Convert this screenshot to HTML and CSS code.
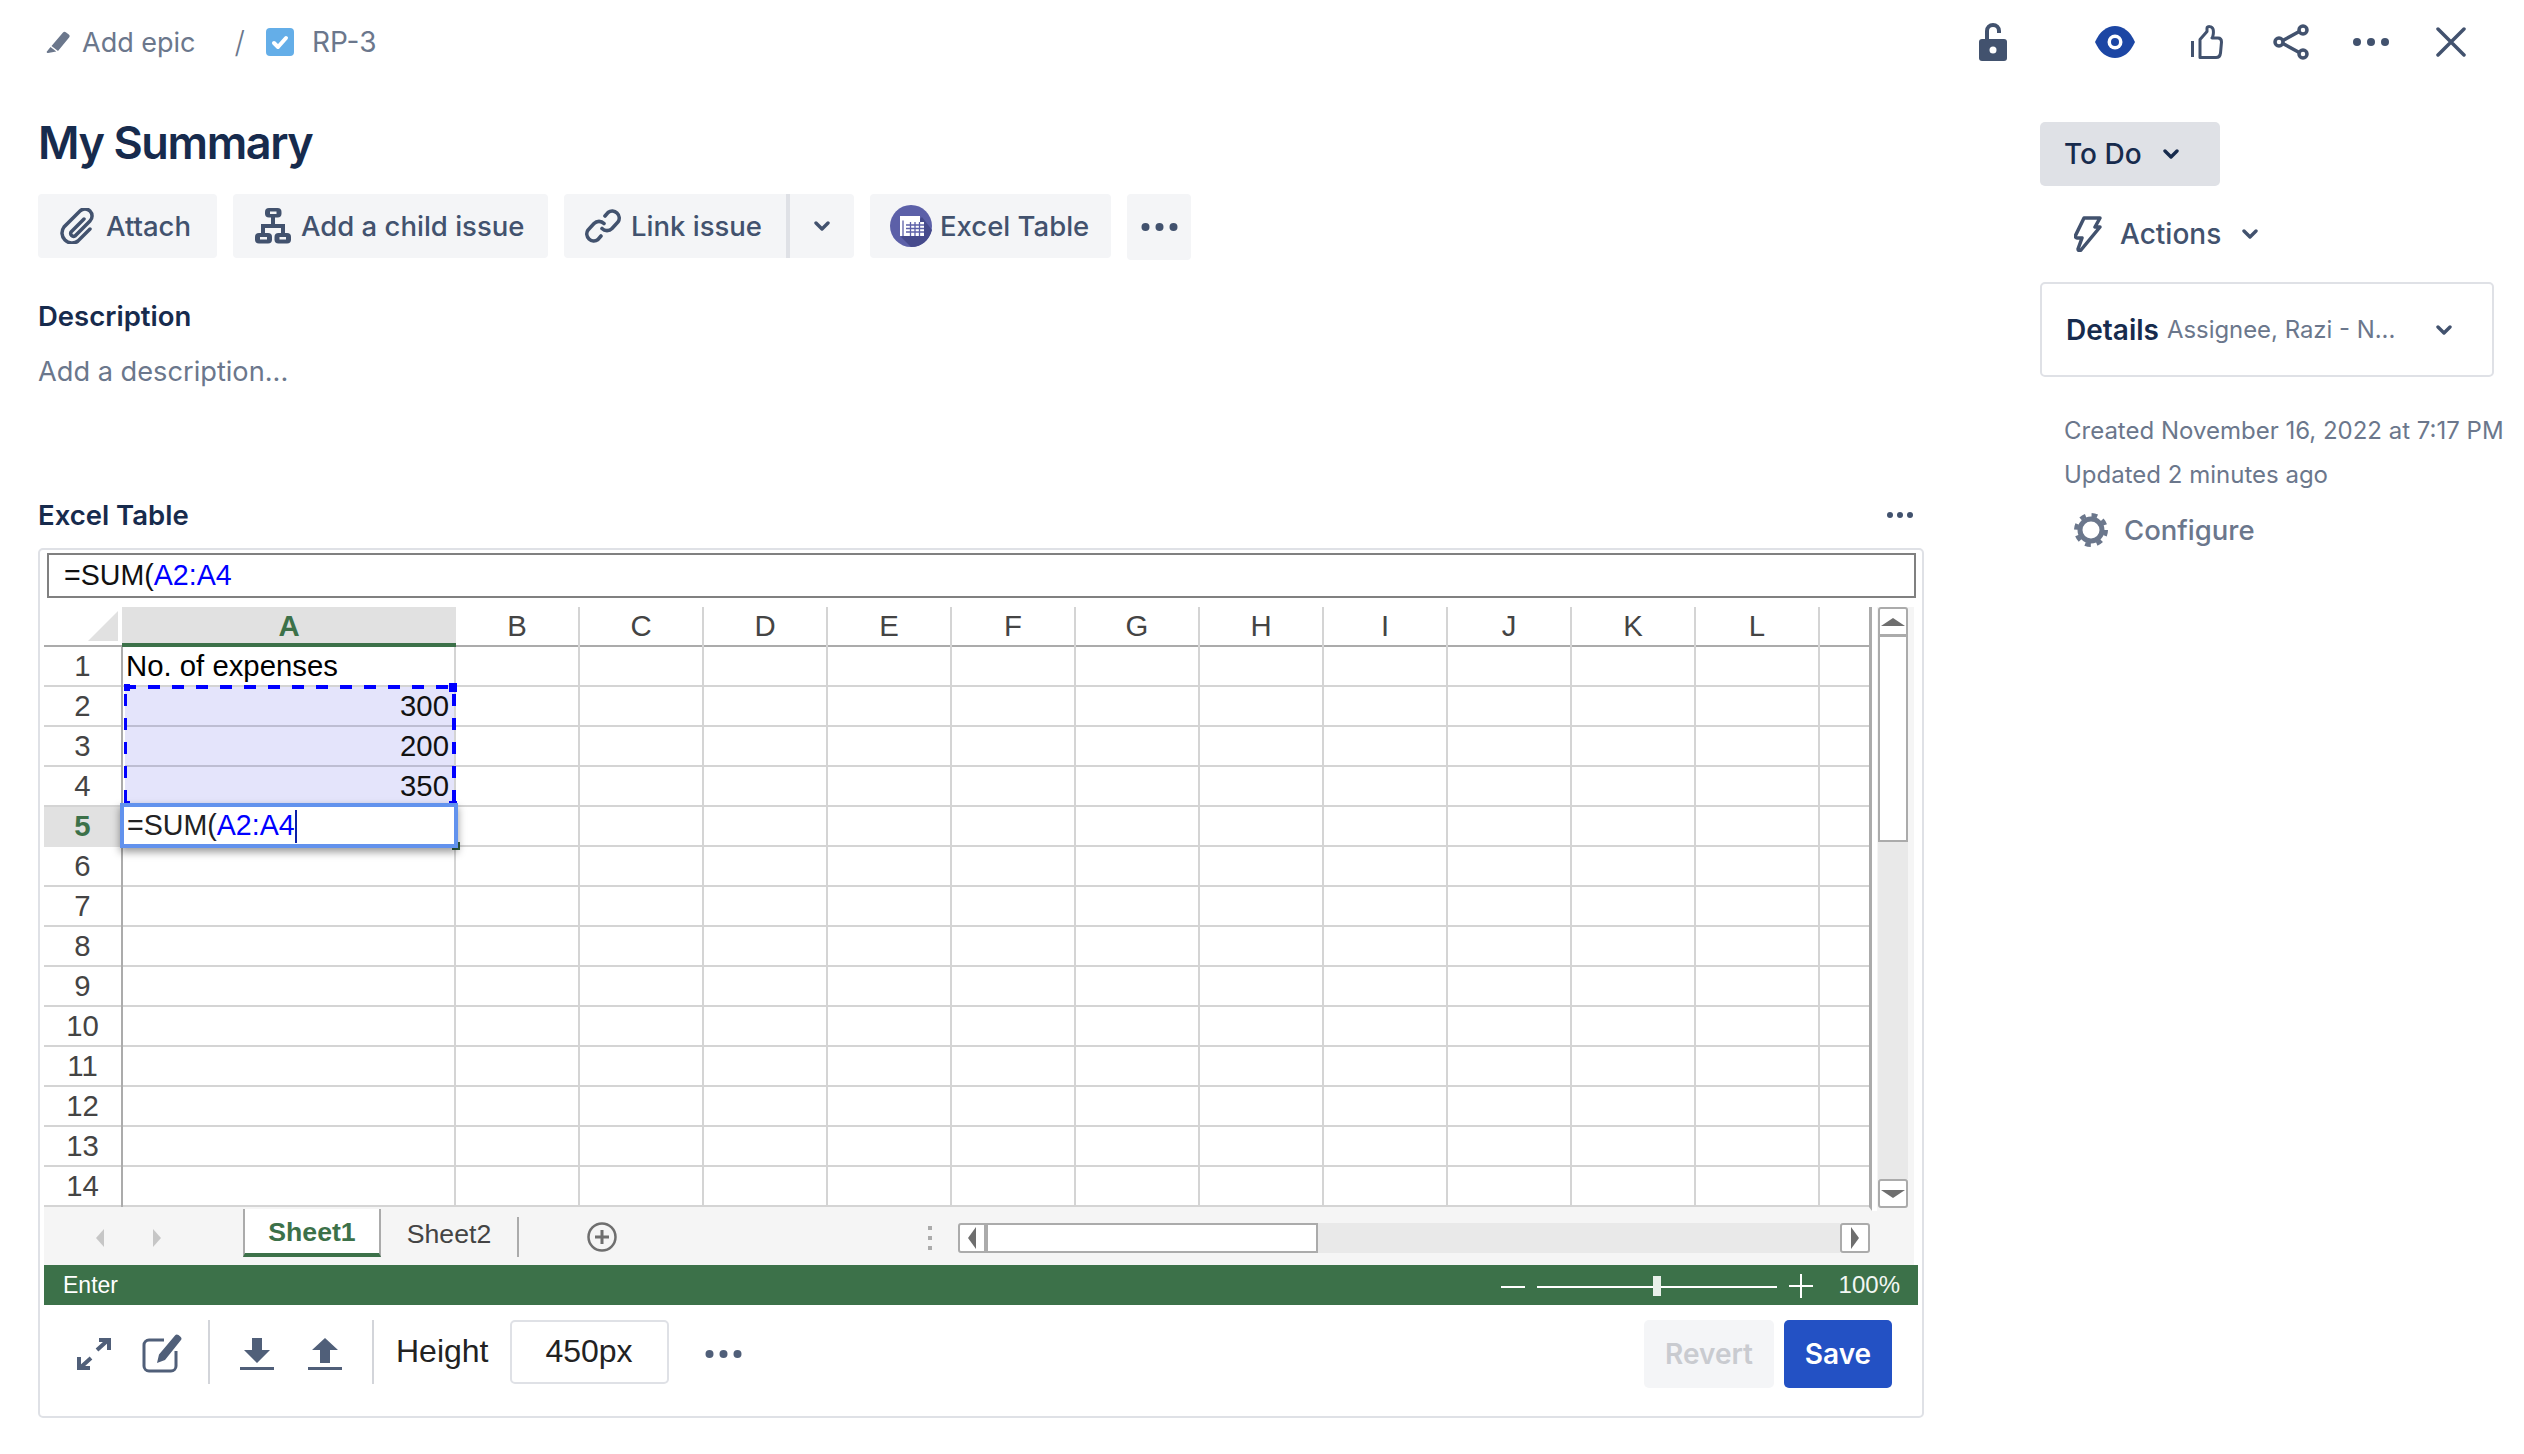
FILE: index.html
```html
<!DOCTYPE html>
<html lang="en">
<head>
<meta charset="utf-8">
<title>RP-3</title>
<link rel="stylesheet" href="styles.css">
</head>
<body>
<header class="topbar">
  <svg class="ic-pencil" viewBox="0 0 24 22"><path d="M17 1.500a2 2 0 0 1 2.800-.3l3 2.400a2 2 0 0 1 .3 2.800L12 20l-6.500-5z" fill="#6b778c"/><path d="M4.500 16l5.800 4.600L2 22c-1 .2-1.500-.5-1.300-1.300z" fill="#6b778c"/></svg>
  <span class="crumb">Add epic</span>
  <span class="crumb-sep">/</span>
  <svg class="ic-check" viewBox="0 0 28 28"><rect width="28" height="28" rx="4" fill="#64aee8"/><path d="M8 15l4 4 8-9" fill="none" stroke="#fff" stroke-width="4" stroke-linecap="round" stroke-linejoin="round"/></svg>
  <span class="crumb crumb-key">RP-3</span>
  <div class="top-actions">
    <svg class="ic-lock" viewBox="0 0 28 38"><path d="M8 18V8a6 6 0 0 1 12 0v2" fill="none" stroke="#42526e" stroke-width="4"/><rect y="16" width="28" height="22" rx="3" fill="#42526e"/><circle cx="14" cy="27" r="3.500" fill="#fff"/></svg>
    <svg class="ic-eye" viewBox="0 0 40 32"><path d="M0 16C5 5 12 0 20 0s15 5 20 16c-5 11-12 16-20 16S5 27 0 16z" fill="#1c46a4"/><circle cx="20" cy="16" r="7.500" fill="#fff"/><circle cx="20" cy="16" r="4" fill="#1c46a4"/></svg>
    <svg class="ic-thumb" viewBox="0 0 32 34"><path d="M1.500 16v16M9 14.500l7-8V3c0-2 5-2 6 1 1 3 0 8-1 9h6c3 0 3.500 2 3.500 4l-1 11c-.3 3-2 4.500-4.500 4.500H9z" fill="none" stroke="#42526e" stroke-width="3" stroke-linejoin="round"/></svg>
    <svg class="ic-share" viewBox="0 0 36 36"><path d="M7 18L29 6M7 18l22 12" stroke="#42526e" stroke-width="3.500"/><circle cx="6" cy="18" r="4" fill="#fff" stroke="#42526e" stroke-width="3.500"/><circle cx="30" cy="6" r="4" fill="#fff" stroke="#42526e" stroke-width="3.500"/><circle cx="30" cy="30" r="4" fill="#fff" stroke="#42526e" stroke-width="3.500"/></svg>
    <svg class="ic-dots" viewBox="0 0 36 8"><circle cx="4" cy="4" r="4" fill="#42526e"/><circle cx="18" cy="4" r="4" fill="#42526e"/><circle cx="32" cy="4" r="4" fill="#42526e"/></svg>
    <svg class="ic-close" viewBox="0 0 30 30"><path d="M2 2l26 26M28 2L2 28" stroke="#42526e" stroke-width="3.500" stroke-linecap="round"/></svg>
  </div>
</header>

<div class="layout">
  <main class="main">
    <h1 class="title">My Summary</h1>
    <div class="btn-row">
      <button class="btn btn-attach"><svg class="btn-ic" viewBox="0 0 36 36"><path d="M24 11L11 24a3 3 0 0 0 4 4L30 13a7 7 0 0 0-10-10L4 19a10 10 0 0 0 14 14L30 21" fill="none" stroke="#42526e" stroke-width="3.500" stroke-linecap="round"/></svg>Attach</button>
      <button class="btn btn-child"><svg class="btn-ic" viewBox="0 0 36 36"><path d="M18 8v10M8 27v-9h20v9" fill="none" stroke="#42526e" stroke-width="4"/><rect x="10" y="0" width="16.500" height="9.500" rx="4" fill="#42526e"/><rect x="15" y="3.500" width="6.500" height="2.500" fill="#f4f5f7"/><rect x="0" y="25" width="17" height="10.500" rx="4" fill="#42526e"/><rect x="5" y="29" width="7" height="2.500" fill="#f4f5f7"/><rect x="19.500" y="25" width="16.500" height="10.500" rx="4" fill="#42526e"/><rect x="24.500" y="29" width="6.500" height="2.500" fill="#f4f5f7"/></svg>Add a child issue</button>
      <div class="split">
        <button class="btn btn-link"><svg class="btn-ic" viewBox="0 0 36 36"><path d="M20 8l3-3.500a7 7 0 0 1 10 9.500l-6 6.500a7 7 0 0 1-10 0M16 28l-3 3.500a7 7 0 0 1-10-9.500l6-6.500a7 7 0 0 1 10 0" fill="none" stroke="#42526e" stroke-width="3.600" stroke-linecap="round"/></svg>Link issue</button>
        <button class="btn btn-caret"><svg class="chev" viewBox="0 0 16 10"><path d="M2 2l6 6 6-6" fill="none" stroke="#42526e" stroke-width="3.400" stroke-linecap="round" stroke-linejoin="round"/></svg></button>
      </div>
      <button class="btn btn-excel"><svg class="xl-ic" viewBox="0 0 42 42"><circle cx="21" cy="21" r="21" fill="#5c60a8"/><path d="M11 32l10 10c10 0 18-6 21-17L32 12z" fill="#464a8c"/><rect x="10" y="11" width="20" height="20" fill="#fff"/><rect x="16" y="17" width="18" height="14" fill="#fff"/><path d="M13 15.500V31M16 20h18M16 23.500h18M16 27h18M20.500 17v14M25 17v14M29.500 17v14" stroke="#5c60a8" stroke-width="1.300"/></svg>Excel Table</button>
      <button class="btn btn-more"><svg class="dots-md" viewBox="0 0 36 8"><circle cx="4" cy="4" r="4" fill="#42526e"/><circle cx="18" cy="4" r="4" fill="#42526e"/><circle cx="32" cy="4" r="4" fill="#42526e"/></svg></button>
    </div>
    <h2 class="label label-desc">Description</h2>
    <p class="desc">Add a description...</p>
    <div class="section-head">
      <h2 class="label">Excel Table</h2>
      <svg class="dots-sm" viewBox="0 0 26 6"><circle cx="3" cy="3" r="3" fill="#42526e"/><circle cx="13" cy="3" r="3" fill="#42526e"/><circle cx="23" cy="3" r="3" fill="#42526e"/></svg>
    </div>

    <section class="card">
      <div class="formula">=SUM(<span class="ref">A2:A4</span></div>
      <div class="sheet-body">
        <div class="canvas">
          <div class="row head">
            <div class="rh"><span class="corner"></span></div>
            <div class="c a">A</div><div class="c">B</div><div class="c">C</div><div class="c">D</div><div class="c">E</div><div class="c">F</div><div class="c">G</div><div class="c">H</div><div class="c">I</div><div class="c">J</div><div class="c">K</div><div class="c">L</div><div class="c end"></div>
          </div>
          <div class="row"><div class="rh">1</div><div class="c a txt">No. of expenses</div><div class="c"></div><div class="c"></div><div class="c"></div><div class="c"></div><div class="c"></div><div class="c"></div><div class="c"></div><div class="c"></div><div class="c"></div><div class="c"></div><div class="c"></div><div class="c end"></div></div>
          <div class="row"><div class="rh">2</div><div class="c a num">300</div><div class="c"></div><div class="c"></div><div class="c"></div><div class="c"></div><div class="c"></div><div class="c"></div><div class="c"></div><div class="c"></div><div class="c"></div><div class="c"></div><div class="c"></div><div class="c end"></div></div>
          <div class="row"><div class="rh">3</div><div class="c a num">200</div><div class="c"></div><div class="c"></div><div class="c"></div><div class="c"></div><div class="c"></div><div class="c"></div><div class="c"></div><div class="c"></div><div class="c"></div><div class="c"></div><div class="c"></div><div class="c end"></div></div>
          <div class="row"><div class="rh">4</div><div class="c a num">350</div><div class="c"></div><div class="c"></div><div class="c"></div><div class="c"></div><div class="c"></div><div class="c"></div><div class="c"></div><div class="c"></div><div class="c"></div><div class="c"></div><div class="c"></div><div class="c end"></div></div>
          <div class="row"><div class="rh active">5</div><div class="c a"></div><div class="c"></div><div class="c"></div><div class="c"></div><div class="c"></div><div class="c"></div><div class="c"></div><div class="c"></div><div class="c"></div><div class="c"></div><div class="c"></div><div class="c"></div><div class="c end"></div></div>
          <div class="row"><div class="rh">6</div><div class="c a"></div><div class="c"></div><div class="c"></div><div class="c"></div><div class="c"></div><div class="c"></div><div class="c"></div><div class="c"></div><div class="c"></div><div class="c"></div><div class="c"></div><div class="c"></div><div class="c end"></div></div>
          <div class="row"><div class="rh">7</div><div class="c a"></div><div class="c"></div><div class="c"></div><div class="c"></div><div class="c"></div><div class="c"></div><div class="c"></div><div class="c"></div><div class="c"></div><div class="c"></div><div class="c"></div><div class="c"></div><div class="c end"></div></div>
          <div class="row"><div class="rh">8</div><div class="c a"></div><div class="c"></div><div class="c"></div><div class="c"></div><div class="c"></div><div class="c"></div><div class="c"></div><div class="c"></div><div class="c"></div><div class="c"></div><div class="c"></div><div class="c"></div><div class="c end"></div></div>
          <div class="row"><div class="rh">9</div><div class="c a"></div><div class="c"></div><div class="c"></div><div class="c"></div><div class="c"></div><div class="c"></div><div class="c"></div><div class="c"></div><div class="c"></div><div class="c"></div><div class="c"></div><div class="c"></div><div class="c end"></div></div>
          <div class="row"><div class="rh">10</div><div class="c a"></div><div class="c"></div><div class="c"></div><div class="c"></div><div class="c"></div><div class="c"></div><div class="c"></div><div class="c"></div><div class="c"></div><div class="c"></div><div class="c"></div><div class="c"></div><div class="c end"></div></div>
          <div class="row"><div class="rh">11</div><div class="c a"></div><div class="c"></div><div class="c"></div><div class="c"></div><div class="c"></div><div class="c"></div><div class="c"></div><div class="c"></div><div class="c"></div><div class="c"></div><div class="c"></div><div class="c"></div><div class="c end"></div></div>
          <div class="row"><div class="rh">12</div><div class="c a"></div><div class="c"></div><div class="c"></div><div class="c"></div><div class="c"></div><div class="c"></div><div class="c"></div><div class="c"></div><div class="c"></div><div class="c"></div><div class="c"></div><div class="c"></div><div class="c end"></div></div>
          <div class="row"><div class="rh">13</div><div class="c a"></div><div class="c"></div><div class="c"></div><div class="c"></div><div class="c"></div><div class="c"></div><div class="c"></div><div class="c"></div><div class="c"></div><div class="c"></div><div class="c"></div><div class="c"></div><div class="c end"></div></div>
          <div class="row"><div class="rh">14</div><div class="c a"></div><div class="c"></div><div class="c"></div><div class="c"></div><div class="c"></div><div class="c"></div><div class="c"></div><div class="c"></div><div class="c"></div><div class="c"></div><div class="c"></div><div class="c"></div><div class="c end"></div></div>
          <div class="range"><i class="hd tl"></i><i class="hd tr"></i><i class="hd bl"></i><i class="hd br"></i></div>
          <i class="fill-handle"></i>
          <div class="editor">=SUM(<span class="ref">A2:A4</span><span class="caret"></span></div>
        </div>
        <div class="vscroll">
          <div class="sb-btn sb-up"><i class="tri tri-up"></i></div>
          <div class="sb-thumb"></div>
          <div class="sb-track"></div>
          <div class="sb-btn sb-down"><i class="tri tri-down"></i></div>
        </div>
      </div>
      <div class="strip">
        <div class="tab-nav"><i class="tri tri-left pale"></i><i class="tri tri-right pale"></i></div>
        <div class="tab tab-active">Sheet1</div>
        <div class="tab tab-plain">Sheet2</div>
        <svg class="add-sheet" viewBox="0 0 30 30"><circle cx="15" cy="15" r="13.500" fill="none" stroke="#6f6f6f" stroke-width="2.500"/><path d="M15 8v14M8 15h14" stroke="#6f6f6f" stroke-width="3"/></svg>
        <div class="split-dots"><i></i><i></i><i></i></div>
        <div class="hscroll">
          <div class="hs-btn hs-left"><i class="tri tri-left"></i></div>
          <div class="hs-thumb"></div>
          <div class="hs-track"></div>
          <div class="hs-btn hs-right"><i class="tri tri-right"></i></div>
        </div>
      </div>
      <div class="status">
        <span class="status-text">Enter</span>
        <div class="zoom">
          <i class="zoom-minus"></i>
          <div class="zoom-slider"><i class="zoom-thumb"></i></div>
          <svg class="zoom-plus" viewBox="0 0 24 24"><path d="M12 0v24M0 12h24" stroke="#fff" stroke-width="2"/></svg>
          <span class="zoom-val">100%</span>
        </div>
      </div>
      <div class="toolbar">
        <svg class="tool-expand" viewBox="0 0 34 32"><path d="M20 12L30 3M14 20L4 29M22 2h10v10M2 19v11h11" fill="none" stroke="#505f79" stroke-width="4"/></svg>
        <svg class="tool-edit" viewBox="0 0 40 39"><path d="M22 6H7a5 5 0 0 0-5 5v21a5 5 0 0 0 5 5h22a5 5 0 0 0 5-5V17" fill="none" stroke="#505f79" stroke-width="3"/><path d="M33 1.500a2.500 2.500 0 0 1 3.500-.4l2 1.700a2.500 2.500 0 0 1 .3 3.500L23 26l-8 3 2-8.500z" fill="#505f79"/></svg>
        <i class="vsep vsep-a"></i>
        <svg class="tool-load" viewBox="0 0 34 32"><path d="M12 0h10v12h8L17 25 4 12h8zM0 29h34v3H0z" fill="#505f79"/></svg>
        <svg class="tool-load tool-up" viewBox="0 0 34 32"><path d="M12 25h10V12h8L17 0 4 12h8zM0 29h34v3H0z" fill="#505f79"/></svg>
        <i class="vsep vsep-b"></i>
        <span class="height-label">Height</span>
        <div class="height-input">450px</div>
        <svg class="tool-dots" viewBox="0 0 36 8"><circle cx="4" cy="4" r="4" fill="#505f79"/><circle cx="18" cy="4" r="4" fill="#505f79"/><circle cx="32" cy="4" r="4" fill="#505f79"/></svg>
        <button class="tbtn tbtn-revert">Revert</button>
        <button class="tbtn tbtn-save">Save</button>
      </div>
    </section>
  </main>

  <aside class="side">
    <button class="todo">To Do<svg class="chev chev-todo" viewBox="0 0 16 10"><path d="M2 2l6 6 6-6" fill="none" stroke="#172b4d" stroke-width="3.400" stroke-linecap="round" stroke-linejoin="round"/></svg></button>
    <div class="actions">
      <svg class="ic-bolt" viewBox="0 0 28 36"><path d="M10 2h16l-5 9h5L7 34c-2 1.500-3 0-3-1l4-11H3c-1 0-2-1-1.500-2.500z" fill="none" stroke="#42526e" stroke-width="3.500" stroke-linejoin="round"/></svg>
      <span>Actions</span>
      <svg class="chev chev-actions" viewBox="0 0 16 10"><path d="M2 2l6 6 6-6" fill="none" stroke="#42526e" stroke-width="3.400" stroke-linecap="round" stroke-linejoin="round"/></svg>
    </div>
    <div class="details">
      <strong>Details</strong>
      <span class="details-sub">Assignee, Razi - N...</span>
      <svg class="chev chev-details" viewBox="0 0 16 10"><path d="M2 2l6 6 6-6" fill="none" stroke="#42526e" stroke-width="3.400" stroke-linecap="round" stroke-linejoin="round"/></svg>
    </div>
    <p class="meta meta-first">Created November 16, 2022 at 7:17 PM</p>
    <p class="meta">Updated 2 minutes ago</p>
    <div class="configure">
      <svg class="ic-gear" viewBox="0 0 34 34"><circle cx="17" cy="17" r="11" fill="none" stroke="#6b778c" stroke-width="5"/><circle cx="17" cy="17" r="15" fill="none" stroke="#6b778c" stroke-width="4" stroke-dasharray="5.800 6"/></svg>
      <span>Configure</span>
    </div>
  </aside>
</div>
</body>
</html>
```

FILE: styles.css
```css
* { box-sizing: border-box; }
html, body { margin: 0; padding: 0; background: #fff; }
body { font-family: Inter, "Noto Sans", sans-serif; color: #172b4d; width: 2524px; height: 1454px; overflow: hidden; }
h1, h2, p { margin: 0; }
button { font-family: inherit; border: 0; cursor: pointer; }
i { display: block; }

/* top bar */
.topbar { display: flex; align-items: center; height: 84px; padding: 0 58px 0 46px; }
.ic-pencil { width: 24px; height: 22px; }
.crumb { font-size: 27px; color: #6b778c; margin-left: 12px; }
.crumb-sep { font-size: 30px; color: #6b778c; margin-left: 39px; font-weight: 300; }
.ic-check { width: 28px; height: 28px; margin-left: 21px; }
.crumb-key { margin-left: 18px; font-size: 28px; }
.top-actions { margin-left: auto; display: flex; align-items: center; }
.ic-lock { width: 28px; height: 38px; }
.ic-eye { width: 40px; height: 32px; margin-left: 88px; }
.ic-thumb { width: 32px; height: 34px; margin-left: 56px; }
.ic-share { width: 36px; height: 36px; margin-left: 50px; }
.ic-dots { width: 36px; height: 8px; margin-left: 44px; }
.ic-close { width: 30px; height: 30px; margin-left: 47px; }

/* layout */
.layout { display: flex; padding-left: 38px; }
.main { width: 1886px; flex: none; }
.side { width: 454px; flex: none; margin-left: 116px; padding-top: 38px; }

.title { font-size: 45px; line-height: 56px; font-weight: 600; margin-top: 31px; letter-spacing: -1.4px; }
.btn-row { display: flex; align-items: flex-start; margin-top: 23px; gap: 16px; height: 64px; }
.btn { display: flex; align-items: center; height: 64px; background: #f4f5f7; border-radius: 4px; font-size: 27.500px; font-weight: 500; color: #42526e; padding: 0; }
.btn-ic { width: 36px; height: 36px; flex: none; }
.btn-attach { width: 179px; padding-left: 22px; gap: 10px; }
.btn-child { width: 315px; padding-left: 22px; gap: 10px; }
.split { display: flex; }
.btn-link { width: 226px; padding-left: 21px; gap: 10px; border-radius: 4px 0 0 4px; border-right: 4px solid #dfe1e6; }
.btn-caret { width: 64px; justify-content: center; border-radius: 0 4px 4px 0; }
.chev { width: 16px; height: 10px; flex: none; }
.btn-excel { width: 241px; padding-left: 20px; gap: 8px; }
.xl-ic { width: 42px; height: 42px; flex: none; }
.btn-more { width: 64px; height: 66px; justify-content: center; }
.dots-md { width: 37px; height: 8px; }

.label { font-size: 27.500px; line-height: 32px; font-weight: 600; }
.label-desc { margin-top: 42px; }
.desc { font-size: 27.200px; line-height: 40px; color: #6b778c; margin-top: 20px; }
.section-head { display: flex; justify-content: space-between; align-items: center; margin-top: 107px; padding-right: 11px; }
.dots-sm { width: 26px; height: 6px; }

/* card */
.card { margin-top: 17px; height: 870px; border: 2px solid #dfe1e6; border-radius: 5px; padding-top: 3px; font-family: "Liberation Sans", Arial, sans-serif; color: #000; }
.formula { margin-left: 7px; width: 1869px; height: 45px; border: 2px solid #808080; padding-left: 15px; font-size: 28.600px; line-height: 41px; color: #111; }
.ref { color: #0000ff; }
.sheet-body { display: flex; margin: 9px 0 0 4px; }

.canvas { position: relative; width: 1828px; height: 604px; overflow: hidden; border-right: 3px solid #ababab; border-bottom: 4px solid #f5f5f5; box-shadow: inset 0 -2px 0 #ababab; }
.row { display: flex; height: 40px; border-bottom: 2px solid #d4d4d4; }
.row.head { border-bottom-color: #ababab; }
.rh { width: 79px; flex: none; height: 40px; border-right: 2px solid #ababab; font-size: 29.330px; line-height: 38px; text-align: center; color: #444; }
.head .rh { width: 78px; border-right: 0; padding: 0 4px 6px 0; display: flex; justify-content: flex-end; align-items: flex-end; }
.corner { width: 30px; height: 30px; background: #e1e1e1; clip-path: polygon(100% 0, 100% 100%, 0 100%); }
.rh.active { background: #e1e1e1; color: #3c7149; font-weight: 700; }
.c { width: 124px; flex: none; height: 40px; border-right: 2px solid #d4d4d4; font-size: 29.330px; line-height: 38px; color: #000; }
.c.a { width: 333px; }
.c.end { flex: 1; border-right: 0; }
.head .c { text-align: center; color: #444; font-size: 29.330px; }
.head .c.a { width: 334px; background: #e1e1e1; color: #3c7149; font-weight: 700; border-right: 0; border-bottom: 4px solid #3c7149; }
.txt { padding-left: 3px; }
.num { background: #e4e4fb; border-left: 2px solid #fff; text-align: right; padding-right: 5px; color: #111; box-shadow: inset 0 -2px 0 #bdbdd2; }
.range { position: absolute; left: 80px; top: 78px; width: 332px; height: 120px;
  background:
    repeating-linear-gradient(90deg, #0000ff 0 12px, transparent 12px 24px) top / 100% 4px no-repeat,
    repeating-linear-gradient(180deg, transparent 0 9px, #0000ff 9px 21px, transparent 21px 24px) left / 3px 100% no-repeat,
    repeating-linear-gradient(180deg, transparent 0 9px, #0000ff 9px 21px, transparent 21px 24px) right / 4px 100% no-repeat; }
.hd { position: absolute; background: #0000ff; }
.tl { left: 0; top: -1px; width: 6px; height: 7px; }
.tr { right: -1px; top: -2px; width: 8px; height: 9px; }
.bl { left: 0; bottom: -2px; width: 6px; height: 6px; }
.br { right: -1px; bottom: -2px; width: 8px; height: 6px; }
.fill-handle { position: absolute; left: 408px; top: 235px; width: 8px; height: 8px; background: #2f5d3c; }
.editor { position: absolute; left: 76px; top: 196px; width: 338px; height: 45px; background: #fff; border: 4px solid #6292ed; box-shadow: 0 4px 8px rgba(0,0,0,.4); padding-left: 3px; font-size: 28.600px; line-height: 36px; color: #222; }
.caret { display: inline-block; width: 2px; height: 33px; background: #0a1fa8; vertical-align: -8px; margin-left: 0; }

/* vertical scrollbar */
.vscroll { width: 37px; margin-left: 5px; height: 604px; background: #f5f5f5; padding: 0 6px 0 1px; display: flex; flex-direction: column; }
.sb-btn { height: 30px; background: #fff; border: 2px solid #ababab; flex: none; display: flex; align-items: center; justify-content: center; border-radius: 3px; }
.sb-up { border-bottom-width: 3px; border-radius: 3px 3px 0 0; }
.sb-thumb { height: 205px; background: #fff; border: 2px solid #ababab; border-top: 0; flex: none; }
.sb-track { flex: 1; background: #e9e9e9; }
.sb-down { height: 29px; margin-bottom: 3px; }
.tri { width: 0; height: 0; border: 7px solid transparent; }
.tri-up { border-bottom: 8px solid #6e6e6e; border-top: 0; border-left-width: 12px; border-right-width: 12px; }
.tri-down { border-top: 8px solid #6e6e6e; border-bottom: 0; border-left-width: 12px; border-right-width: 12px; }
.tri-left { border-right: 8px solid #6e6e6e; border-left: 0; border-top-width: 11px; border-bottom-width: 11px; }
.tri-right { border-left: 8px solid #6e6e6e; border-right: 0; border-top-width: 11px; border-bottom-width: 11px; }
.tri-left.pale { border-right-color: #c6c6c6; border-top-width: 9px; border-bottom-width: 9px; }
.tri-right.pale { border-left-color: #c6c6c6; border-top-width: 9px; border-bottom-width: 9px; }

/* sheet strip */
.strip { display: flex; align-items: flex-start; width: 1870px; margin-left: 4px; height: 54px; background: #f5f5f5; position: relative; }
.tab-nav { width: 199px; height: 54px; flex: none; display: flex; align-items: center; gap: 49px; padding-left: 52px; }
.tab { font-size: 26.670px; text-align: center; flex: none; }
.tab-active { width: 138px; height: 48px; margin-top: -2px; background: #fff; border: 2px solid #ababab; border-top: 0; border-bottom: 4px solid #3c7149; color: #3c7149; font-weight: 700; line-height: 46px; }
.tab-plain { width: 138px; height: 40px; margin-top: 6px; line-height: 34px; border-right: 2px solid #ababab; color: #444; }
.add-sheet { width: 30px; height: 30px; margin: 11px 0 0 68px; flex: none; }
.split-dots { margin: 15px 0 0 311px; display: flex; flex-direction: column; gap: 6px; width: 4px; flex: none; }
.split-dots i { width: 4px; height: 4px; background: #ababab; }
.hscroll { display: flex; margin: 12px 0 0 26px; height: 30px; width: 912px; flex: none; }
.hs-btn { width: 30px; height: 30px; background: #fff; border: 2px solid #ababab; border-radius: 3px; flex: none; display: flex; align-items: center; justify-content: center; }
.hs-left { border-right-width: 4px; border-radius: 3px 0 0 3px; }
.hs-thumb { width: 330px; background: #fff; border: 2px solid #ababab; border-left: 0; flex: none; }
.hs-track { flex: 1; background: #e9e9e9; }

/* status bar */
.status { display: flex; align-items: center; width: 1874px; margin-left: 4px; height: 40px; background: #3c7149; padding-left: 19px; color: #fff; font-size: 23px; }
.status-text { line-height: 40px; }
.zoom { margin-left: auto; display: flex; align-items: center; padding-right: 18px; }
.zoom-minus { width: 24px; height: 2px; background: #fff; margin-top: 4px; }
.zoom-slider { position: relative; width: 240px; height: 2px; background: #fff; margin: 4px 0 0 12px; }
.zoom-thumb { position: absolute; left: 116px; top: -10px; width: 8px; height: 20px; background: #e9f0ea; }
.zoom-plus { width: 24px; height: 24px; margin: 2px 0 0 12px; }
.zoom-val { font-size: 24px; margin-left: 26px; color: #f2f7f3; }

/* bottom toolbar */
.toolbar { display: flex; align-items: flex-start; padding: 15px 30px 0 37px; position: relative; font-size: 32px; color: #222; }
.tool-expand { width: 34px; height: 32px; margin-top: 18px; flex: none; }
.tool-edit { width: 40px; height: 39px; margin: 14px 0 0 31px; flex: none; }
.vsep { width: 2px; height: 64px; background: #d3d5da; flex: none; }
.vsep-a { margin-left: 26px; }
.tool-load { width: 34px; height: 32px; margin: 18px 0 0 30px; flex: none; }
.tool-up { margin-left: 34px; }
.vsep-b { margin-left: 30px; }
.height-label { margin-left: 22px; line-height: 62px; }
.height-input { width: 159px; height: 64px; margin-left: 21px; border: 2px solid #dfe1e6; border-radius: 5px; text-align: center; line-height: 58px; }
.tool-dots { width: 37px; height: 8px; margin: 30px 0 0 36px; flex: none; }
.tbtn { height: 68px; border-radius: 5px; font-family: Inter, sans-serif; font-size: 28px; font-weight: 600; }
.tbtn-revert { width: 130px; margin-left: auto; background: #f4f5f7; color: #c9cbd0; }
.tbtn-save { width: 108px; margin-left: 10px; background: #2351c4; color: #fff; }

/* sidebar */
.todo { display: flex; align-items: center; width: 180px; height: 64px; background: #dfe1e6; border-radius: 5px; font-size: 28px; font-weight: 500; color: #172b4d; padding: 0 0 0 24px; }
.chev-todo { margin-left: 21px; }
.actions { display: flex; align-items: center; height: 36px; margin: 30px 0 0 34px; font-size: 28px; font-weight: 500; color: #42526e; }
.ic-bolt { width: 28px; height: 36px; flex: none; }
.actions span { margin-left: 18px; }
.chev-actions { margin-left: 21px; }
.details { display: flex; align-items: center; height: 95px; margin-top: 30px; border: 2px solid #dfe1e6; border-radius: 5px; padding: 0 40px 0 24px; }
.details strong { font-size: 28px; font-weight: 600; }
.details-sub { font-size: 23.900px; color: #6b778c; margin-left: 8px; white-space: nowrap; }
.chev-details { margin-left: auto; }
.meta { font-size: 24px; line-height: 44px; color: #6b778c; margin-left: 24px; white-space: nowrap; }
.meta-first { margin-top: 32px; }
.configure { display: flex; align-items: center; margin: 15px 0 0 34px; height: 36px; font-size: 27.500px; font-weight: 500; color: #6b778c; }
.ic-gear { width: 34px; height: 34px; flex: none; }
.configure span { margin-left: 16px; }
```
